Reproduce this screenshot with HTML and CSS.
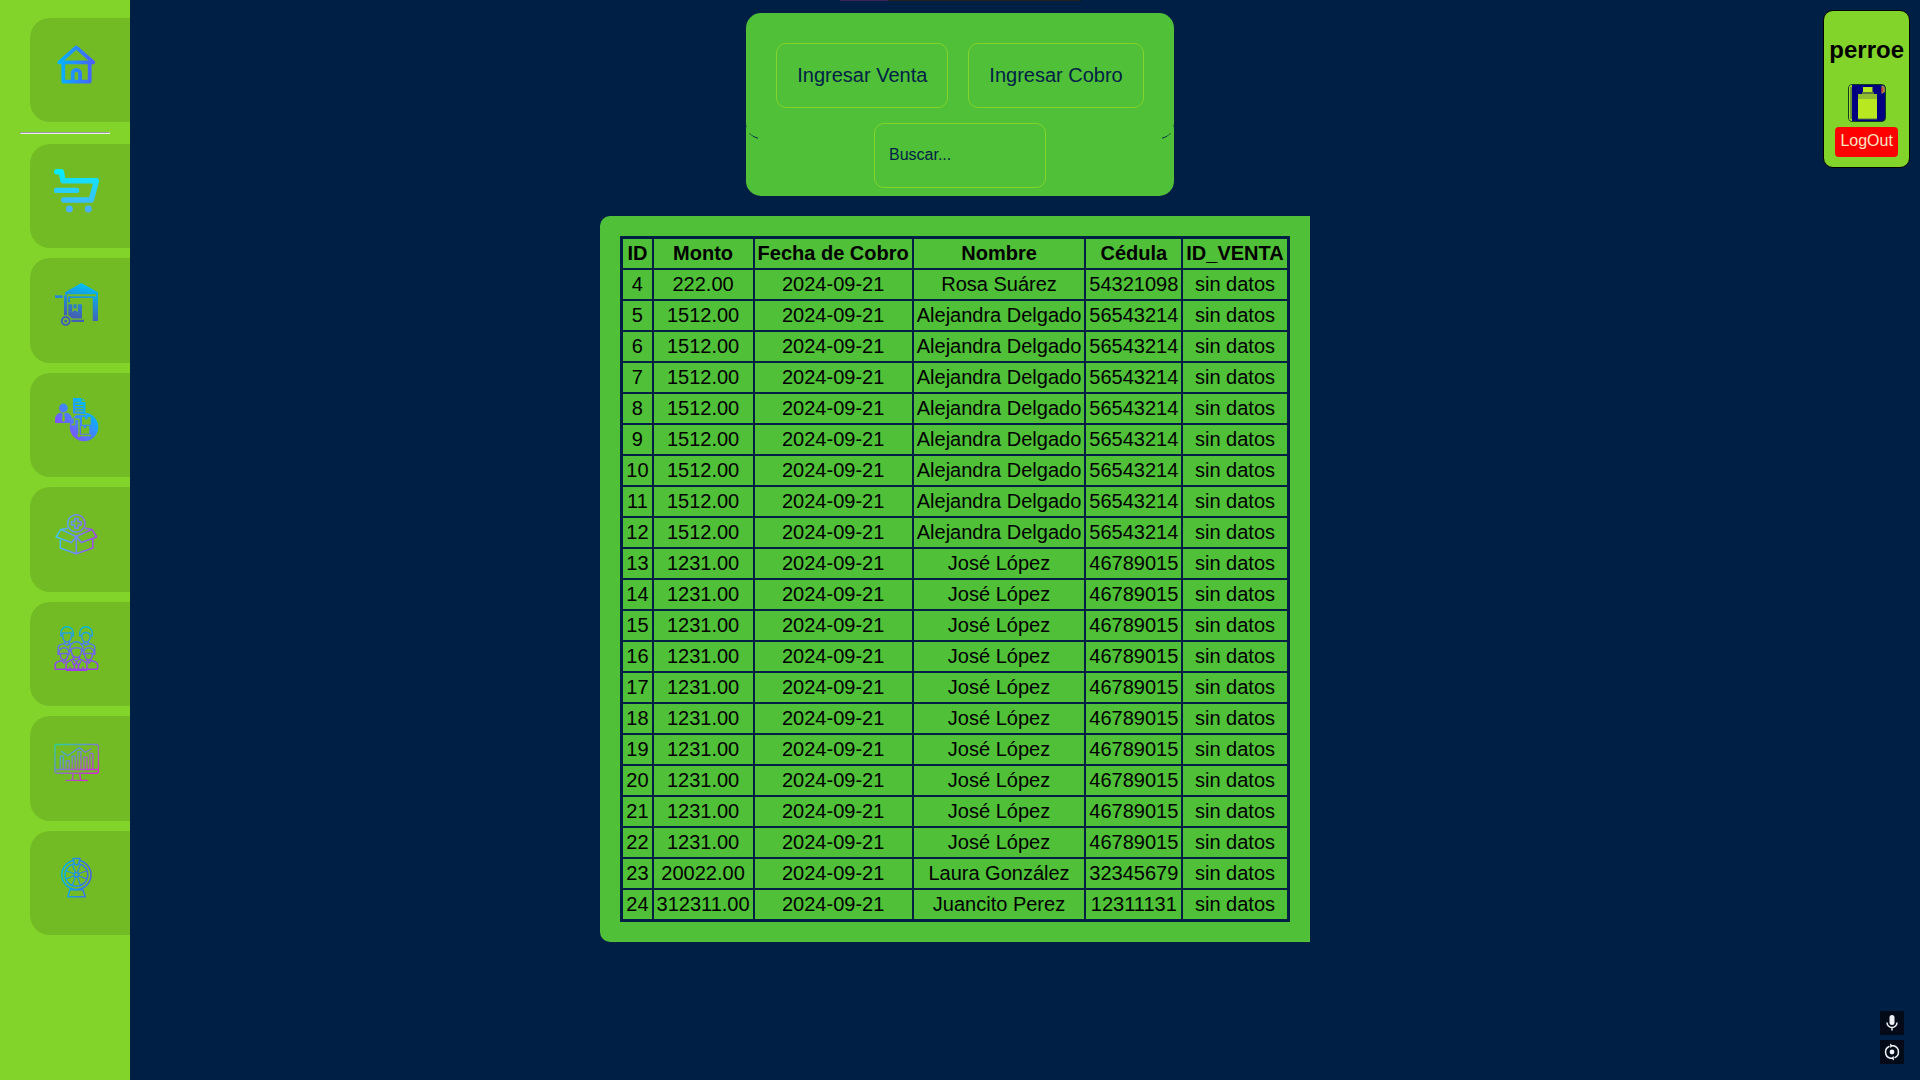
FILE: index.html
```html
<!DOCTYPE html>
<html lang="es">
<head>
<meta charset="utf-8">
<title>Cobros</title>
<link rel="stylesheet" href="styles.css">
</head>
<body>
<div class="page">
  <nav class="sidebar" aria-label="Principal">
    <a class="tile tile-home" href="#inicio" aria-label="Inicio">
      <svg class="icon" viewBox="0 0 45 45" fill="none" stroke="url(#g1)" stroke-width="3.8" stroke-linejoin="round" stroke-linecap="round">
        <defs><linearGradient id="g1" gradientUnits="userSpaceOnUse" x1="4" y1="22" x2="41" y2="22"><stop offset="0" stop-color="#00b8ff"/><stop offset="1" stop-color="#4f5bff"/></linearGradient></defs>
        <path d="M5.3 20.4 22.3 5.4 39.3 20.4ZM9.3 20.4V39.6H35.7V20.4M18.7 39.6V31.5a3.7 3.7 0 0 1 7.4 0V39.6"/>
      </svg>
    </a>
    <hr class="divider">
    <div class="tiles">
      <a class="tile" href="#ventas" aria-label="Ventas">
        <svg class="icon" viewBox="0 0 45 45" fill="none" stroke="url(#g2)" stroke-width="5.4" stroke-linejoin="round" stroke-linecap="round">
          <defs><linearGradient id="g2" gradientUnits="userSpaceOnUse" x1="0" y1="0" x2="0" y2="45"><stop offset="0" stop-color="#00f2fe"/><stop offset="1" stop-color="#4facfe"/></linearGradient></defs>
          <path d="M2.700 3.7H7.3L9 12.7H42.4L37.3 32H9.7M2.700 22.4H22.6"/>
          <g fill="url(#g2)" stroke="none"><circle cx="15.4" cy="41" r="3.4"/><circle cx="34.3" cy="41" r="3.4"/></g>
        </svg>
      </a>
      <a class="tile" href="#almacen" aria-label="Almacén">
        <svg class="icon" viewBox="0 0 45 45" fill="url(#g3)">
          <defs><linearGradient id="g3" gradientUnits="userSpaceOnUse" x1="30" y1="1" x2="20" y2="34"><stop offset="0" stop-color="#00c0f8"/><stop offset="1" stop-color="#4361b4"/></linearGradient></defs>
          <path d="M27.3 1 44 10.2V39H38.7V16H16V20.5H14V14.2H42V12.2H13.3V14L11 12.4V10.2Z"/>
          <path d="M1 13.3H8.8V16H1ZM10 13.3H11.5L13.2 15V33.3H10ZM14.3 22.3H18.3V30L21 28 23.8 30V22.3H28V36.4H18L14.3 33ZM19.5 22.3H22.6V26.8L21 26 19.5 26.8ZM17.5 37.8H30V40H17.5Z"/>
          <circle cx="11.7" cy="39" r="4" fill="none" stroke="url(#g3)" stroke-width="2"/><circle cx="11.7" cy="39" r="1.5"/>
        </svg>
      </a>
      <a class="tile" href="#proveedores" aria-label="Proveedores">
        <svg class="icon" viewBox="0 0 45 45" fill="url(#g4)">
          <defs><linearGradient id="g4" gradientUnits="userSpaceOnUse" x1="12" y1="36" x2="36" y2="12"><stop offset="0" stop-color="#854fff"/><stop offset="1" stop-color="#00b8ff"/></linearGradient></defs>
          <circle cx="9.4" cy="11" r="4.4"/>
          <path d="M1 26V22.5C1 18.5 3.7 15.7 7.3 15.4L9.5 17.5 11.7 15.4C15.3 15.7 18 18.5 18 22.5V26Z"/>
          <path d="M19 1H27.5V5H31.4V16.5H19Z"/><path d="M28.6 1.2 31.2 3.8H28.6Z"/>
          <circle cx="30" cy="30" r="14.3"/>
          <g fill="none" stroke="#73bb25" stroke-width="1">
            <path d="M9.5 17.5V24M21 5.3H25.5M21 8.5H29.5M21 11.3H29.5M21 14H29.5M19 17.6H32.5" />
            <path stroke-width="1.4" d="M17.5 27.5H20.5V20.5M21.5 22.2H25V38.5H37"/>
            <circle cx="25" cy="38.5" r="1.2"/>
          </g>
          <g fill="#73bb25"><path d="M8.7 17H10.3L11 23.5 9.5 25 8 23.5ZM28 20H31V22.8L32.3 22 33.6 22.8V20H36.7V27.8H28ZM27 29H29.7V31.5L31 30.7 32.3 31.5V29H35.2V36.7H27Z"/></g>
        </svg>
      </a>
      <a class="tile" href="#productos" aria-label="Productos">
        <svg class="icon" viewBox="0 0 45 45" fill="none" stroke="url(#g5)" stroke-width="1.5" stroke-linejoin="round">
          <defs><linearGradient id="g5" gradientUnits="userSpaceOnUse" x1="2" y1="22" x2="43" y2="22"><stop offset="0" stop-color="#3fc8f0"/><stop offset=".5" stop-color="#7287fb"/><stop offset="1" stop-color="#a53fe8"/></linearGradient></defs>
          <circle cx="22.3" cy="12.4" r="8.7"/>
          <path d="M20.7 7.5H24V10.7H27.2V14H24V17.3H20.7V14H17.5V10.7H20.7Z"/>
          <path d="M14 17.3 6.7 18.4 2.2 26 17.5 31.5 22.3 25.5 27.2 31.5 42.6 26 38 18.4 30.8 17.3M6.7 18.4 22.3 25.5 38 18.4M6.3 27.5V37L22.3 42.8 38.8 37V27.5M22.3 25.5V42.8"/>
        </svg>
      </a>
      <a class="tile" href="#clientes" aria-label="Clientes">
        <svg class="icon" viewBox="0 0 45 45" fill="none" stroke="url(#g6)" stroke-width="1.5" stroke-linejoin="round">
          <defs><linearGradient id="g6" gradientUnits="userSpaceOnUse" x1="0" y1="0" x2="0" y2="45"><stop offset="0" stop-color="#00bcd4"/><stop offset=".5" stop-color="#6272e8"/><stop offset="1" stop-color="#a03aec"/></linearGradient></defs>
          <path d="M6.8 10V7A6.2 6.2 0 0 1 19.3 7V10H17.5V7H8.6V10ZM8.8 10C9 14 11 16 13 16S17 14 17.3 10M10.8 15.5V18L13 19.5 15.3 18V15.5"/>
          <path d="M25.7 10V7A6.2 6.2 0 0 1 38.2 7V10H36.4C36 8 34 6.5 32 6.5S28 8 27.5 10ZM27.7 10C28 14 30 16 32 16S36 14 36.2 10M29.8 15.5V18L32 19.5 34.3 18V15.5"/>
          <path d="M4.2 29V21.5C4.2 19 7 18 10.8 17.5M15.3 17.5 18.5 18.3M40.8 29V21.5C40.8 19 38 18 34.3 17.5M29.8 17.5 26.4 18.3"/>
          <path d="M16 25V22.2A6.4 6.4 0 0 1 28.8 22.2V25M17.3 23.5C18 22 20 21.8 22.4 21.8S27 22 27.5 23.5V26C27 29 24.8 31.5 22.4 31.5S18 29 17.3 26ZM16 25H17.3M27.5 25H28.8"/>
          <path d="M4.8 29V27A5.2 5.2 0 0 1 15.2 27V29M6.5 27.5H13.7V30C13 33 11.5 34 10 34S7 33 6.5 30ZM29.6 29V27A5.2 5.2 0 0 1 40 27V29M31 27.5H38.3V30C37.7 33 36.2 34 34.8 34S31.7 33 31 30Z"/>
          <path d="M1.2 43.3V38.5C1.2 36.5 4 35.5 7.8 34.5L10 37 12.2 34.5M43.6 43.3V38.5C43.6 36.5 41 35.5 37 34.5L34.8 37 32.6 34.5M1.2 43.3H43.6"/>
          <path d="M12 44.3V39C12 36 15 34.5 19.5 33V30.5M33 44.3V39C33 36 30 34.5 25.3 33V30.5M19.5 33 22.4 35.5 25.3 33M12 44.3H33M18 35 20 39.5 22.4 36.5 24.8 39.5 27 35M20.5 44V39.5M24.3 44V39.5M16 44V40.5M29 44V40.5"/>
        </svg>
      </a>
      <a class="tile" href="#reportes" aria-label="Reportes">
        <svg class="icon" viewBox="0 0 45 45" fill="none" stroke="url(#g7)" stroke-width="1.4" stroke-linejoin="round" stroke-linecap="round">
          <defs><linearGradient id="g7" gradientUnits="userSpaceOnUse" x1="5" y1="2" x2="35" y2="42"><stop offset="0" stop-color="#2ccfa0"/><stop offset=".33" stop-color="#5a9bc8"/><stop offset=".6" stop-color="#9a68c0"/><stop offset="1" stop-color="#e01ae0"/></linearGradient></defs>
          <rect x="1" y="4.5" width="43.4" height="28.7" rx="2"/>
          <path d="M1 29.5H44.4M19.3 33.2 18.3 40.2M25.6 33.2 26.7 40.2M12 40.4H33.3"/>
          <path d="M6.2 29.5V16.2H9.2V29.5M12.2 29.5V20.6H15.2V29.5M18.2 29.5V16.2H21.2V29.5M23.9 29.5V11.6H26.9V29.5M29.9 29.5V17H32.9V29.5M35.9 29.5V13.4H38.9V29.5"/>
          <path d="M7.7 11.6 13.7 15.7 25.3 7.6 31.3 12.3 37.3 8.9"/>
        </svg>
      </a>
      <a class="tile" href="#sorteos" aria-label="Sorteos">
        <svg class="icon" viewBox="0 0 45 45" fill="none" stroke="url(#g8)" stroke-width="1.5" stroke-linejoin="round">
          <defs><linearGradient id="g8" gradientUnits="userSpaceOnUse" x1="7" y1="20" x2="38" y2="20"><stop offset="0" stop-color="#00b8e8"/><stop offset="1" stop-color="#4a60e8"/></linearGradient></defs>
          <circle cx="22.4" cy="19.8" r="14.6"/><circle cx="22.4" cy="19.8" r="11.4"/><circle cx="22.4" cy="19.8" r="2.200"/>
          <path stroke-width="1.200" d="M21.4 17.8 18.300 9.200M23.4 17.8 26.500 9.200M20.4 18.8 11.900 15.700M20.4 20.8 11.900 23.9M24.4 18.8 32.900 15.700M24.4 20.8 32.900 23.9M21.4 21.8 18.300 30.4M23.4 21.8 26.500 30.4"/>
          <path fill="#73bb25" d="M19 3.5H26L24.7 8.5 22.4 10.5 20.2 8.5Z"/>
          <path d="M16.3 33.7 13.8 41.7H31.2L28.6 33.7M16.3 34.7H28.6"/>
        </svg>
      </a>
    </div>
  </nav>

  <main class="content">
    <div class="strip"></div>
    <div class="actions">
      <a class="action" href="#venta">Ingresar Venta</a>
      <a class="action" href="#cobro">Ingresar Cobro</a>
    </div>
    <form class="search">
      <input class="search-box" type="text" placeholder="Buscar..." aria-label="Buscar">
    </form>
    <section class="panel">
      <table class="cobros">
        <thead>
          <tr><th>ID</th><th>Monto</th><th>Fecha de Cobro</th><th>Nombre</th><th>Cédula</th><th>ID_VENTA</th></tr>
        </thead>
        <tbody>
          <tr><td>4</td><td>222.00</td><td>2024-09-21</td><td>Rosa Suárez</td><td>54321098</td><td>sin datos</td></tr>
          <tr><td>5</td><td>1512.00</td><td>2024-09-21</td><td>Alejandra Delgado</td><td>56543214</td><td>sin datos</td></tr>
          <tr><td>6</td><td>1512.00</td><td>2024-09-21</td><td>Alejandra Delgado</td><td>56543214</td><td>sin datos</td></tr>
          <tr><td>7</td><td>1512.00</td><td>2024-09-21</td><td>Alejandra Delgado</td><td>56543214</td><td>sin datos</td></tr>
          <tr><td>8</td><td>1512.00</td><td>2024-09-21</td><td>Alejandra Delgado</td><td>56543214</td><td>sin datos</td></tr>
          <tr><td>9</td><td>1512.00</td><td>2024-09-21</td><td>Alejandra Delgado</td><td>56543214</td><td>sin datos</td></tr>
          <tr><td>10</td><td>1512.00</td><td>2024-09-21</td><td>Alejandra Delgado</td><td>56543214</td><td>sin datos</td></tr>
          <tr><td>11</td><td>1512.00</td><td>2024-09-21</td><td>Alejandra Delgado</td><td>56543214</td><td>sin datos</td></tr>
          <tr><td>12</td><td>1512.00</td><td>2024-09-21</td><td>Alejandra Delgado</td><td>56543214</td><td>sin datos</td></tr>
          <tr><td>13</td><td>1231.00</td><td>2024-09-21</td><td>José López</td><td>46789015</td><td>sin datos</td></tr>
          <tr><td>14</td><td>1231.00</td><td>2024-09-21</td><td>José López</td><td>46789015</td><td>sin datos</td></tr>
          <tr><td>15</td><td>1231.00</td><td>2024-09-21</td><td>José López</td><td>46789015</td><td>sin datos</td></tr>
          <tr><td>16</td><td>1231.00</td><td>2024-09-21</td><td>José López</td><td>46789015</td><td>sin datos</td></tr>
          <tr><td>17</td><td>1231.00</td><td>2024-09-21</td><td>José López</td><td>46789015</td><td>sin datos</td></tr>
          <tr><td>18</td><td>1231.00</td><td>2024-09-21</td><td>José López</td><td>46789015</td><td>sin datos</td></tr>
          <tr><td>19</td><td>1231.00</td><td>2024-09-21</td><td>José López</td><td>46789015</td><td>sin datos</td></tr>
          <tr><td>20</td><td>1231.00</td><td>2024-09-21</td><td>José López</td><td>46789015</td><td>sin datos</td></tr>
          <tr><td>21</td><td>1231.00</td><td>2024-09-21</td><td>José López</td><td>46789015</td><td>sin datos</td></tr>
          <tr><td>22</td><td>1231.00</td><td>2024-09-21</td><td>José López</td><td>46789015</td><td>sin datos</td></tr>
          <tr><td>23</td><td>20022.00</td><td>2024-09-21</td><td>Laura González</td><td>32345679</td><td>sin datos</td></tr>
          <tr><td>24</td><td>312311.00</td><td>2024-09-21</td><td>Juancito Perez</td><td>12311131</td><td>sin datos</td></tr>
        </tbody>
      </table>
    </section>
  </main>

  <aside class="side">
    <div class="user">
      <h2 class="user-name">perroe</h2>
      <svg class="avatar" viewBox="0 0 38 38" aria-hidden="true">
        <rect x=".5" y=".5" width="37" height="37" rx="4" fill="#000080" stroke="#0a3a20"/>
        <path d="M1 4Q1 1 4 1V37Q1 37 1 34Z" fill="#a8dc28"/><path d="M3 3V35" stroke="#24503c" stroke-width="1"/>
        <path d="M15 3H24.500V8H15ZM10 10H29V35H10Z" fill="#b8e820"/>
        <path d="M10 10H29V15H10Z" fill="#92bc30"/><path d="M14 9H26" stroke="#5a7a40" stroke-width="2"/>
        <path d="M10 35H29" stroke="#5a7a40" stroke-width="1"/>
        <path d="M33.500 1.500H34Q37 1.500 37 5V8L33.500 10Z" fill="#a08048"/><path d="M34 4V8" stroke="#e02020" stroke-width="1"/>
      </svg>
      <a class="logout" href="#logout">LogOut</a>
    </div>
    <div class="tools">
      <button class="tool" type="button" aria-label="Micrófono">
        <svg viewBox="0 0 24 24" fill="none" stroke="#eef0f4" stroke-width="1.500"><rect x="9.500" y="4" width="5" height="10" rx="2.500" fill="#eef0f4" stroke="none"/><path d="M7 11.500a5 5 0 0 0 10 0M12 16.500V19.500"/></svg>
      </button>
      <button class="tool" type="button" aria-label="Captura">
        <svg viewBox="0 0 24 24" fill="none" stroke="#eef0f4" stroke-width="1.500"><circle cx="12" cy="12" r="2.400" fill="#eef0f4" stroke="none"/><path d="M9.500 6.200A6.300 6.300 0 0 0 10.500 18.200L12.500 18.300M14.500 17.800A6.300 6.300 0 0 0 13.500 5.800L11.500 5.700"/><path d="M10 3.500 13 5.700 10.300 8ZM14 20.500 11 18.300 13.700 16Z" fill="#eef0f4" stroke="none"/></svg>
      </button>
    </div>
  </aside>
</div>
</body>
</html>
```

FILE: styles.css
```css
:root {
  --navy: #001f45;
  --lime: #82d42b;
  --moss: #73bb25;
  --green: #4fc038;
}

* {
  box-sizing: border-box;
}

body {
  margin: 0;
  background: var(--navy);
  color: #000;
  font-family: "Liberation Sans", Arial, sans-serif;
  font-size: 20px;
}

.page {
  display: grid;
  grid-template-columns: 130px 1fr 130px;
  min-height: 100vh;
}

/* left navigation */
.sidebar {
  padding: 18px 0 20px 30px;
  background: var(--lime);
}

.tile {
  display: block;
  padding: 24px;
  border-radius: 20px 0 0 20px;
  background: var(--moss);
}

.tile-home {
  height: 104px;
}

.tiles {
  display: grid;
  grid-auto-rows: 1fr;
  gap: 10px;
  height: 791px;
}

.icon {
  display: block;
  width: 45px;
  height: 45px;
}

.divider {
  width: 90px;
  margin: 10px 0 10px -10px;
  border: 1px solid;
  border-color: #9a9a9a #eee #eee #9a9a9a;
}

/* centre column */
.content {
  display: flex;
  flex-direction: column;
  align-items: center;
}

.strip {
  width: 241px;
  height: 1px;
  margin-bottom: 12px;
  background: linear-gradient(to right, #3a2456 20%, #222 20%);
}

.actions {
  display: flex;
  gap: 20px;
  padding: 30px;
  border-radius: 15px;
  background: var(--green);
}

.action {
  padding: 20px;
  border: 1px solid var(--lime);
  border-radius: 10px;
  color: var(--navy);
  line-height: 23px;
  text-decoration: none;
}

.search {
  position: relative;
  display: flex;
  justify-content: center;
  align-items: flex-end;
  width: 428px;
  height: 69px;
  margin-top: -11px;
  padding-bottom: 8px;
  border-radius: 0 0 15px 15px;
  background: var(--green);
}

/* faint edge of the card above, seen at its lower corners */
.search::before,
.search::after {
  content: "";
  position: absolute;
  top: -4px;
  width: 15px;
  height: 15px;
  border-bottom: 1px solid var(--navy);
  clip-path: inset(10px 3px 0);
}

.search::before {
  left: 0;
  border-bottom-left-radius: 15px;
}

.search::after {
  right: 0;
  border-bottom-right-radius: 15px;
}

.search-box {
  width: 172px;
  height: 65px;
  padding: 0 14px 2px;
  border: 1px solid var(--lime);
  border-radius: 10px;
  background: transparent;
  color: var(--navy);
  font: 16px "Liberation Sans", Arial, sans-serif;
}

.search-box::placeholder {
  color: var(--navy);
  opacity: 1;
}

.panel {
  margin: 20px 10px 20px 0;
  padding: 20px;
  border-radius: 10px 0 0 10px;
  background: var(--green);
}

.cobros {
  border: 3px solid var(--navy);
  border-collapse: collapse;
  line-height: 23px;
  text-align: center;
  white-space: nowrap;
}

.cobros th,
.cobros td {
  padding: 3px;
  border: 2px solid var(--navy);
}

/* right column */
.side {
  display: flex;
  flex-direction: column;
  justify-content: space-between;
  align-items: flex-end;
  padding: 10px 10px 16px;
}

.user {
  display: flex;
  flex-direction: column;
  align-items: center;
  padding: 25px 5px 10px;
  border: 1px solid #000;
  border-radius: 10px;
  background: var(--lime);
}

.user-name {
  margin: 0 0 20px;
  font-size: 24px;
  line-height: 28px;
}

.avatar {
  width: 38px;
  height: 38px;
  margin-bottom: 5px;
}

.logout {
  height: 30px;
  padding: 5px;
  border-radius: 4px;
  background: #f00;
  color: #f5e6c4;
  font-size: 16px;
  line-height: 18px;
  text-decoration: none;
}

.tools {
  display: flex;
  flex-direction: column;
  gap: 5px;
  margin-right: 6px;
}

.tool {
  width: 24px;
  height: 24px;
  padding: 0;
  border: 0;
  background: #030a18;
}

.tool svg {
  display: block;
}
```
